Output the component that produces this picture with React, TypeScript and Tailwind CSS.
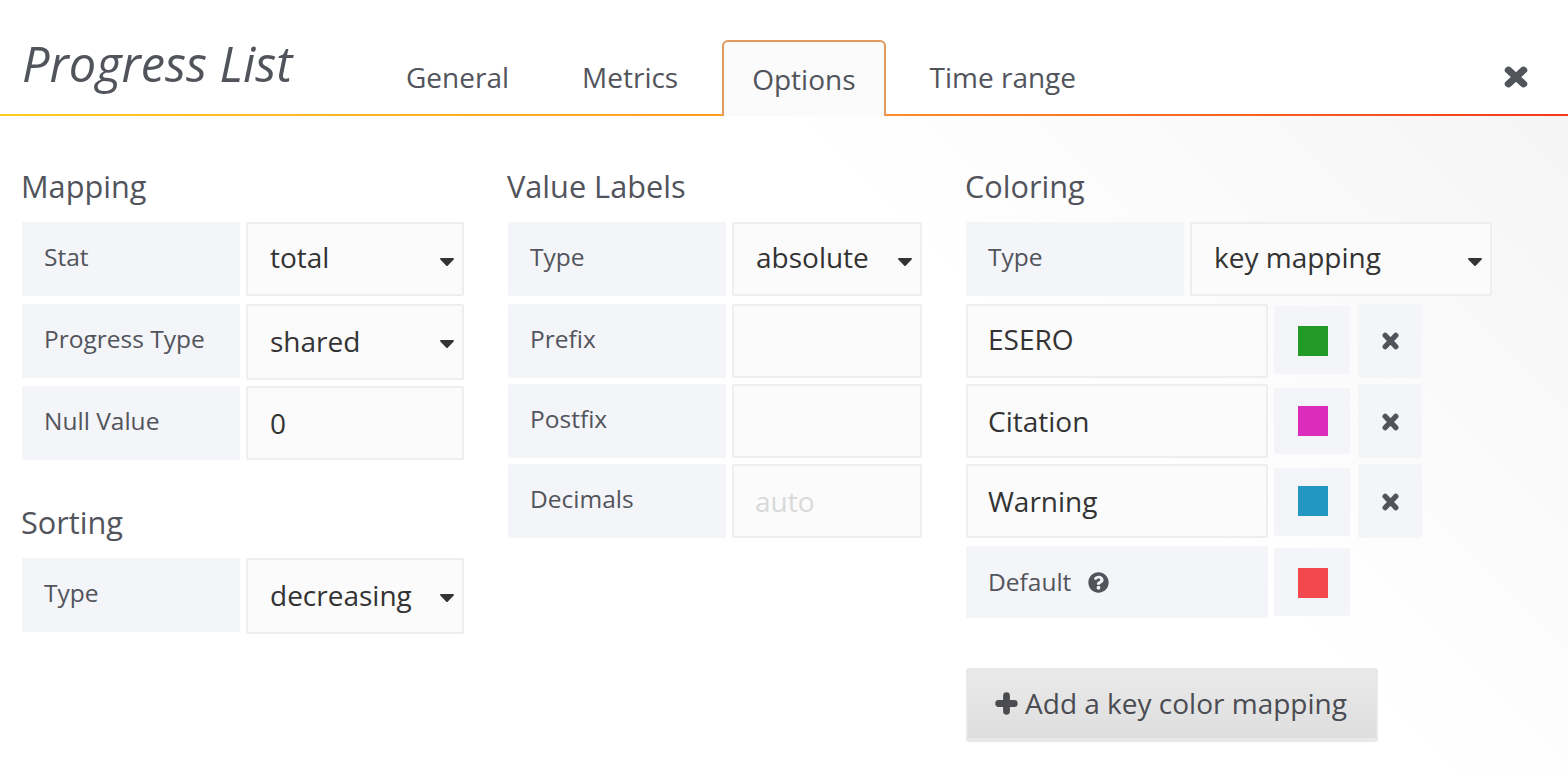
import React from "react";
import { FaQuestionCircle, FaCaretDown } from "react-icons/fa";

const FONT = "font-['Open_Sans',sans-serif]";

const Cross = ({ className = "" }: { className?: string }) => (
  <svg viewBox="0 0 16 16" preserveAspectRatio="none" className={className} fill="none" stroke="currentColor" strokeWidth="5" strokeLinecap="round">
    <path d="M3 3 L13 13 M13 3 L3 13" />
  </svg>
);

const Label = ({
  children,
  className = "",
  h = "h-[74px] pb-[4px]",
}: {
  children: React.ReactNode;
  className?: string;
  h?: string;
}) => (
  <div className={`flex items-center rounded-[2px] bg-[#f4f5f8] pl-[22px] text-[24.5px] text-[#52545c] ${h} ${className}`}>
    {children}
  </div>
);

const Field = ({
  value,
  placeholder,
  select,
  className = "",
}: {
  value?: string;
  placeholder?: string;
  select?: boolean;
  className?: string;
}) => (
  <div className={`relative flex items-center rounded-[2px] border-2 border-[#eeeeee] bg-[#fbfbfb] text-[28px] text-[#333333] ${className}`}>
    {value}
    {placeholder && <span className="text-[#d8d9da]">{placeholder}</span>}
    {select && <FaCaretDown className="absolute right-[3px] top-[25px] h-[24px] w-[24px] text-[#333333]" />}
  </div>
);

const Heading = ({ children, className = "" }: { children: React.ReactNode; className?: string }) => (
  <h3 className={`-ml-[1px] text-[30.7px] leading-[40px] text-[#52545c] ${className}`}>{children}</h3>
);

const Row = ({ children, className = "" }: { children: React.ReactNode; className?: string }) => (
  <div className={`flex gap-[6px] ${className}`}>{children}</div>
);

const colorRows = [
  { name: "ESERO", color: "bg-[#229a26]", top: "mt-[8px]", text: "pb-[4px]", swatch: "h-[68px] mt-[2px] pt-[2px]", cross: "" },
  { name: "Citation", color: "bg-[#dc2cbd]", top: "mt-[6px]", text: "", swatch: "h-[66px] mt-[4px]", cross: "pt-[1px]" },
  { name: "Warning", color: "bg-[#2496c2]", top: "mt-[6px]", text: "", swatch: "h-[68px] mt-[4px] pb-[2px]", cross: "pt-[2px]" },
];

export default function App() {
  return (
    <div className={`h-[776px] w-[1568px] overflow-hidden bg-white ${FONT}`}>
      {/* header */}
      <div className="relative flex h-[116px]">
        <div className="absolute bottom-0 left-0 h-[2px] w-full bg-[linear-gradient(90deg,#ffcb22_0%,#ff9a25_50%,#f4391f_100%)]" />
        <div className="w-[374px] pl-[22px] pt-[31px] text-[48.7px] italic leading-[64px] text-[#52545c]">Progress List</div>
        <div className="flex gap-[9px] pt-[40px] text-[28px] text-[#52545c]">
          <div className="flex h-[76px] items-center px-[32px] pb-[2px]">General</div>
          <div className="flex h-[76px] items-center px-[32px] pb-[2px]">Metrics</div>
          <div className="relative ml-[3px] flex h-[76px] items-center rounded-t-[6px] border-2 border-b-0 border-[#e19a5c] bg-[#fbfbfb] px-[28px]">Options</div>
          <div className="ml-[3px] flex h-[76px] items-center px-[32px] pb-[2px]">Time range</div>
        </div>
        <Cross className="absolute right-[40px] top-[66px] h-[22px] w-[24px] text-[#52545c]" />
      </div>

      {/* body */}
      <div className="flex h-[660px] bg-[linear-gradient(225deg,#f5f5f5_0%,#ffffff_35%)] pl-[22px] pt-[50px]">
        <div className="w-[486px]">
          <Heading>Mapping</Heading>
          <Row className="mt-[16px]">
            <Label className="w-[218px]">Stat</Label>
            <Field value="total" select className="h-[74px] w-[218px] pb-[4px] pl-[22px]" />
          </Row>
          <Row className="mt-[8px]">
            <Label className="w-[218px]">Progress Type</Label>
            <Field value="shared" select className="h-[76px] w-[218px] pb-[2px] pl-[22px]" />
          </Row>
          <Row className="mt-[6px]">
            <Label className="w-[218px]">Null Value</Label>
            <Field value="0" className="h-[74px] w-[218px] pl-[22px]" />
          </Row>
          <Heading className="mt-[42px]">Sorting</Heading>
          <Row className="mt-[16px]">
            <Label className="w-[218px]">Type</Label>
            <Field value="decreasing" select className="h-[76px] w-[218px] pb-[2px] pl-[22px]" />
          </Row>
        </div>

        <div className="w-[458px]">
          <Heading>Value Labels</Heading>
          <Row className="mt-[16px]">
            <Label className="w-[218px]">Type</Label>
            <Field value="absolute" select className="h-[74px] w-[190px] pb-[4px] pl-[22px]" />
          </Row>
          <Row className="mt-[8px]">
            <Label className="w-[218px]">Prefix</Label>
            <Field className="h-[74px] w-[190px]" />
          </Row>
          <Row className="mt-[6px]">
            <Label className="w-[218px]">Postfix</Label>
            <Field className="h-[74px] w-[190px]" />
          </Row>
          <Row className="mt-[6px]">
            <Label className="w-[218px]">Decimals</Label>
            <Field placeholder="auto" className="h-[74px] w-[190px] pl-[21px]" />
          </Row>
        </div>

        <div>
          <Heading>Coloring</Heading>
          <Row className="mt-[16px]">
            <Label className="w-[218px]">Type</Label>
            <Field value="key mapping" select className="h-[74px] w-[302px] pb-[4px] pl-[22px]" />
          </Row>
          {colorRows.map((r) => (
            <Row key={r.name} className={r.top}>
              <Field value={r.name} className={`h-[74px] w-[302px] pl-[20px] ${r.text}`} />
              <div className={`flex w-[76px] items-center justify-center rounded-[2px] bg-[#f4f5f8] pl-[2px] ${r.swatch}`}>
                <div className={`h-[30px] w-[30px] ${r.color}`} />
              </div>
              <div className={`ml-[2px] flex h-[74px] w-[64px] items-center justify-center rounded-[2px] bg-[#f4f5f8] ${r.cross}`}>
                <Cross className="h-[18px] w-[17px] text-[#52545c]" />
              </div>
            </Row>
          ))}
          <Row className="mt-[8px]">
            <Label h="h-[72px]" className="w-[302px] gap-[17px]">
              Default
              <FaQuestionCircle className="h-[21px] w-[21px]" />
            </Label>
            <div className="mt-[2px] flex h-[68px] w-[76px] items-center justify-center rounded-[2px] bg-[#f4f5f8] pl-[2px] pt-[2px]">
              <div className="h-[30px] w-[30px] bg-[#f1494d]" />
            </div>
          </Row>
          <button className="mt-[50px] flex h-[74px] w-[412px] items-center justify-center gap-[7px] rounded-[3px] border-2 border-b-4 border-[#e8e8e8] bg-[linear-gradient(180deg,#eaeaea,#dedede)] pb-[2px] pr-[2px] text-[28px] font-medium text-[#4a4c52]">
            <svg viewBox="0 0 22 22" className="h-[23px] w-[23px]" fill="none" stroke="currentColor" strokeWidth="6.5" strokeLinecap="round">
              <path d="M11 3.5 V18.5 M3.5 11 H18.5" />
            </svg>
            Add a key color mapping
          </button>
        </div>
      </div>
    </div>
  );
}
